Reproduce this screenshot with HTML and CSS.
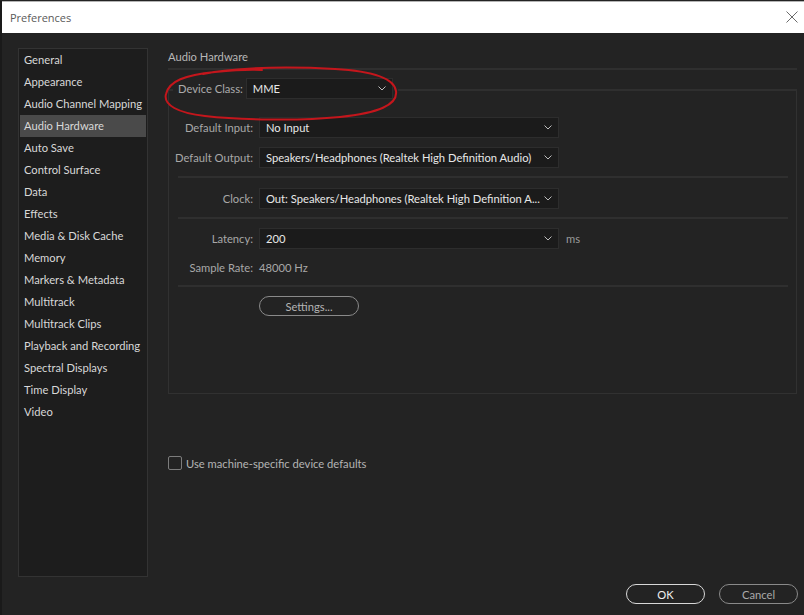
FILE: index.html
```html
<!DOCTYPE html>
<html>
<head>
<meta charset="utf-8">
<link rel="stylesheet" href="styles.css">
</head>
<body>
<div class="window">
  <div class="titlebar">
    <span class="title">Preferences</span>
    <svg class="close" width="12" height="12" viewBox="0 0 12 12"><path d="M0.5 0.5 L11.5 11.5 M11.5 0.5 L0.5 11.5" stroke="#6a6a6a" stroke-width="1" fill="none"/></svg>
  </div>
  <div class="body">
    <ul class="sidebar">
      <li>General</li>
      <li>Appearance</li>
      <li>Audio Channel Mapping</li>
      <li class="selected">Audio Hardware</li>
      <li>Auto Save</li>
      <li>Control Surface</li>
      <li>Data</li>
      <li>Effects</li>
      <li>Media &amp; Disk Cache</li>
      <li>Memory</li>
      <li>Markers &amp; Metadata</li>
      <li>Multitrack</li>
      <li>Multitrack Clips</li>
      <li>Playback and Recording</li>
      <li>Spectral Displays</li>
      <li>Time Display</li>
      <li>Video</li>
    </ul>
    <div class="content">
      <div class="section-title">Audio Hardware</div>
      <div class="rule"></div>
      <div class="group">
        <div class="legend">
          <span class="legend-label">Device Class:</span>
          <div class="select select-small"><span>MME</span><svg class="chev" width="8" height="5" viewBox="0 0 8 5"><path d="M0.5 0.5 L4 4 L7.5 0.5" stroke="#bdbdbd" fill="none" stroke-width="1"/></svg></div>
        </div>
        <div class="row row-first">
          <span class="label">Default Input:</span>
          <div class="select"><span>No Input</span><svg class="chev" width="8" height="5" viewBox="0 0 8 5"><path d="M0.5 0.5 L4 4 L7.5 0.5" stroke="#bdbdbd" fill="none" stroke-width="1"/></svg></div>
        </div>
        <div class="row row-next">
          <span class="label">Default Output:</span>
          <div class="select"><span>Speakers/Headphones (Realtek High Definition Audio)</span><svg class="chev" width="8" height="5" viewBox="0 0 8 5"><path d="M0.5 0.5 L4 4 L7.5 0.5" stroke="#bdbdbd" fill="none" stroke-width="1"/></svg></div>
        </div>
        <div class="sep sep-1"></div>
        <div class="row row-clock">
          <span class="label">Clock:</span>
          <div class="select"><span>Out: Speakers/Headphones (Realtek High Definition A...</span><svg class="chev" width="8" height="5" viewBox="0 0 8 5"><path d="M0.5 0.5 L4 4 L7.5 0.5" stroke="#bdbdbd" fill="none" stroke-width="1"/></svg></div>
        </div>
        <div class="sep sep-2"></div>
        <div class="row row-latency">
          <span class="label">Latency:</span>
          <div class="select"><span>200</span><svg class="chev" width="8" height="5" viewBox="0 0 8 5"><path d="M0.5 0.5 L4 4 L7.5 0.5" stroke="#bdbdbd" fill="none" stroke-width="1"/></svg></div>
          <span class="unit">ms</span>
        </div>
        <div class="row row-rate">
          <span class="label">Sample Rate:</span>
          <span class="value">48000 Hz</span>
        </div>
        <div class="sep sep-3"></div>
        <div class="row row-settings">
          <span class="label"></span>
          <button class="pill settings">Settings...</button>
        </div>
      </div>
      <label class="check">
        <span class="box"></span>
        <span>Use machine-specific device defaults</span>
      </label>
    </div>
  </div>
  <div class="footer">
    <button class="pill ok">OK</button>
    <button class="pill cancel">Cancel</button>
  </div>
  <svg class="annotation" width="804" height="615" viewBox="0 0 804 615">
    <path d="M203 73 C 240 65, 300 66, 335 68 C 370 70, 394 76, 396 90 C 398 104, 378 112, 340 116 C 300 120, 240 119, 205 115 C 178 112, 163 104, 166 93 C 169 80, 185 74, 215 71 C 235 69, 250 68, 262 69" stroke="#c4161c" stroke-width="2" fill="none" stroke-linecap="round"/>
  </svg>
</div>
</body>
</html>
```
FILE: styles.css
```css
* { box-sizing: border-box; }
html, body { margin: 0; padding: 0; }
body {
  width: 804px;
  height: 615px;
  background: #232323;
  font-family: Lato, "Open Sans", sans-serif;
  font-size: 11.2px;
  overflow: hidden;
}
.window {
  position: relative;
  width: 804px;
  height: 615px;
  background: #232323;
  border-left: 2px solid #1a1a1a;
}
.titlebar {
  height: 32px;
  background: #ffffff;
  border-top: 1px solid #b4b4b4;
  margin-top: 1px;
  display: flex;
  align-items: center;
  justify-content: space-between;
  padding: 0 6px 0 8px;
}
.title {
  font-family: "Open Sans", sans-serif;
  font-size: 11px;
  color: #5a5a5a;
  margin-top: -1px;
}
.close { margin-top: -2px; }
.body {
  display: flex;
  padding: 15px 0 0 16px;
}
.sidebar {
  list-style: none;
  margin: 0;
  padding: 0 1px;
  width: 130px;
  height: 529px;
  background: #1d1d1d;
  border: 1px solid #333333;
}
.sidebar li {
  height: 22px;
  line-height: 22px;
  padding-left: 4px;
  color: #d8d8d8;
  white-space: nowrap;
}
.sidebar li.selected {
  background: #4a4a4a;
}
.content {
  margin-left: 20px;
  width: 629px;
}
.section-title {
  color: #b8b8b8;
  line-height: 16px;
  margin-top: 1px;
}
.rule {
  height: 2px;
  background: #2f2f2f;
  margin-top: 3px;
}
.group {
  border: 1px solid #313131;
  border-top: 2px solid #2f2f2f;
  margin-top: 19px;
  height: 305px;
}
.legend {
  display: flex;
  width: max-content;
  align-items: center;
  height: 22px;
  margin: -14px 0 0 4px;
  padding: 0 5px 0 5px;
  background: #232323;
}
.legend-label {
  color: #ababab;
  margin-right: 3px;
}
.select {
  position: relative;
  height: 21px;
  width: 300px;
  background: #1b1b1b;
  border: 1px solid #2d2d2d;
  color: #e8e8e8;
  display: flex;
  align-items: center;
  padding-left: 6px;
  white-space: nowrap;
}
.select-small { width: 147px; }
.chev {
  position: absolute;
  right: 6px;
  top: 7px;
}
.row {
  display: flex;
  align-items: center;
  height: 21px;
}
.label {
  width: 85px;
  text-align: right;
  padding-right: 1px;
  margin-right: 5px;
  color: #a8a8a8;
  white-space: nowrap;
}
.row-first { margin-top: 18px; }
.row-next { margin-top: 9px; }
.sep {
  height: 2px;
  background: #2f2f2f;
  margin: 0 8px 0 9px;
}
.sep-1 { margin-top: 8px; }
.row-clock { margin-top: 10px; }
.sep-2 { margin-top: 8px; }
.row-latency { margin-top: 9px; }
.unit { color: #9a9a9a; margin-left: 7px; }
.row-rate { margin-top: 8px; }
.value { color: #a8a8a8; }
.sep-3 { margin-top: 7px; }
.row-settings { margin-top: 9px; height: 20px; }
.pill {
  font-family: Lato, "Open Sans", sans-serif;
  font-size: 11.2px;
  background: transparent;
  border-radius: 10px;
  height: 20px;
  padding: 0;
  display: flex;
  align-items: center;
  justify-content: center;
}
.settings {
  width: 100px;
  border: 1.5px solid #8a8a8a;
  color: #b4b4b4;
}
.check {
  display: flex;
  align-items: center;
  margin-top: 62px;
  color: #b4b4b4;
}
.box {
  width: 14px;
  height: 14px;
  border: 1px solid #7c7c7c;
  border-radius: 2px;
  margin-right: 4px;
}
.footer {
  display: flex;
  justify-content: flex-end;
  gap: 14px;
  padding: 7px 6px 0 0;
}
.ok {
  width: 79px;
  border: 1.5px solid #d8d8d8;
  color: #f0f0f0;
}
.cancel {
  width: 79px;
  border: 1.5px solid #8a8a8a;
  color: #aaaaaa;
}
.annotation {
  position: absolute;
  left: -2px;
  top: 0;
  pointer-events: none;
}
```
